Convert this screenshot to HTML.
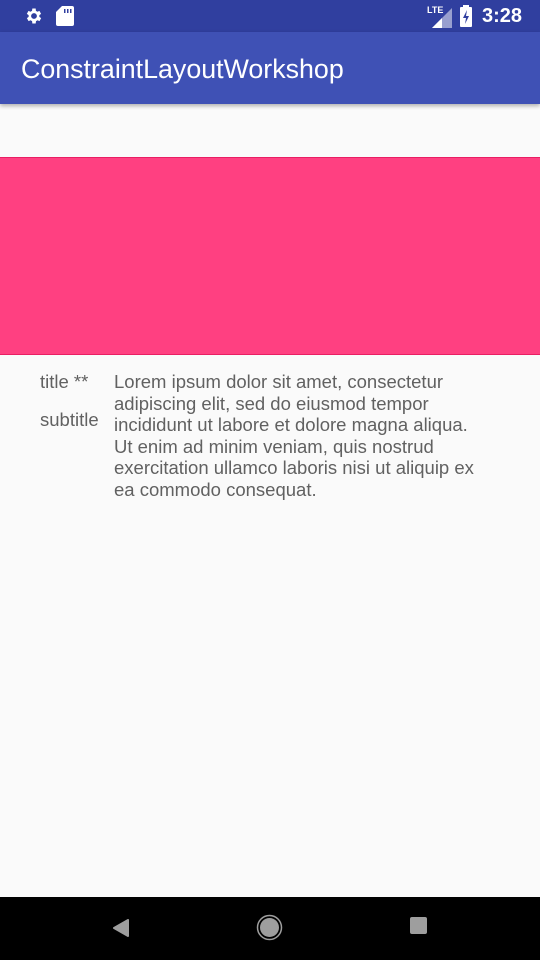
<!DOCTYPE html>
<html><head><style>
*{margin:0;padding:0;box-sizing:border-box}
body{width:540px;height:960px;background:#fafafa;font-family:"Liberation Sans",sans-serif;position:relative;overflow:hidden}
.sb{position:absolute;top:0;left:0;width:540px;height:32px;background:#303f9f;color:#fff}
.ab{position:absolute;top:32px;left:0;width:540px;height:72px;background:#3f51b5;box-shadow:0 2px 4px rgba(0,0,0,.3)}
.ab span{position:absolute;left:21px;top:22px;font-size:26.8px;color:#fff}
.pink{position:absolute;top:157px;left:0;width:540px;height:198px;background:#ff4081;border-top:1px solid #e91e63;border-bottom:1px solid #e91e63}
.t{position:absolute;color:#616161;font-size:18.5px;line-height:21.5px}
.nav{position:absolute;top:897px;left:0;width:540px;height:63px;background:#000}
</style></head><body>
<div class="sb">
<svg style="position:absolute;left:24px;top:6px" width="20" height="20" viewBox="0 0 24 24"><path fill="#fff" d="M19.4 13a7.5 7.5 0 000-2l2.1-1.6-2-3.5-2.5 1a7 7 0 00-1.7-1L15 3h-4l-.4 2.9a7 7 0 00-1.7 1l-2.5-1-2 3.5L6.6 11a7.5 7.5 0 000 2l-2.1 1.6 2 3.5 2.5-1a7 7 0 001.7 1L11 21h4l.4-2.9a7 7 0 001.7-1l2.5 1 2-3.5zM13 15.5A3.5 3.5 0 1113 8.5a3.5 3.5 0 010 7z" transform="translate(-1 0)"/></svg>
<svg style="position:absolute;left:56px;top:6px" width="18" height="20" viewBox="0 0 18 20"><path fill="#fff" d="M6 0h10a2 2 0 012 2v16a2 2 0 01-2 2H2a2 2 0 01-2-2V6z"/><path fill="#303f9f" d="M8 3h1.5v4H8zM11 3h1.5v4H11zM14 3h1.5v4H14z"/></svg>
<span style="position:absolute;left:427px;top:5px;font-size:9px;font-weight:bold">LTE</span>
<svg style="position:absolute;left:428px;top:8px" width="24" height="20"><polygon points="24,0 24,20 4,20" fill="#fff" opacity=".5"/><polygon points="14,10 14,20 4,20" fill="#fff"/></svg>
<svg style="position:absolute;left:460px;top:5px" width="12" height="22"><rect x="0" y="2" width="12" height="20" rx="1" fill="#fff"/><rect x="3" y="0" width="6" height="3" fill="#fff"/><path d="M7 5 3 13h3l-1 6 4-8H6z" fill="#303f9f"/></svg>
<span style="position:absolute;left:482px;top:5px;font-size:20px;font-weight:bold">3:28</span>
</div>
<div class="ab"><span>ConstraintLayoutWorkshop</span></div>
<div class="pink"></div>
<div class="t" style="left:40px;top:371px">title **</div>
<div class="t" style="left:40px;top:409px">subtitle</div>
<div class="t" style="left:114px;top:371px;white-space:nowrap">Lorem ipsum dolor sit amet, consectetur<br>adipiscing elit, sed do eiusmod tempor<br>incididunt ut labore et dolore magna aliqua.<br>Ut enim ad minim veniam, quis nostrud<br>exercitation ullamco laboris nisi ut aliquip ex<br>ea commodo consequat.</div>
<div class="nav">
<svg style="position:absolute;left:112px;top:22px" width="18" height="18"><path d="M16 1v16L2 9z" fill="#9e9e9e" stroke="#9e9e9e" stroke-linejoin="round" stroke-width="2"/></svg>
<svg style="position:absolute;left:256px;top:17px" width="27" height="27"><circle cx="13.5" cy="13.5" r="12" fill="none" stroke="#9e9e9e" stroke-width="1.5"/><circle cx="13.5" cy="13.5" r="9.5" fill="#9e9e9e"/></svg>
<div style="position:absolute;left:410px;top:20px;width:17px;height:17px;background:#9e9e9e;border-radius:2px"></div>
</div>
</body></html>
